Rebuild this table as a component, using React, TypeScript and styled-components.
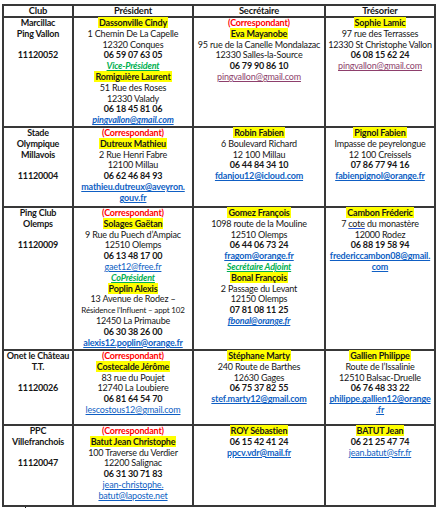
import React from 'react';
import styled, { createGlobalStyle } from 'styled-components';

const GlobalStyle = createGlobalStyle`
  body {
    margin: 0;
    background: #ffffff;
  }
`;

const Sheet = styled.div`
  padding: 4px 0 0 2px;
  font-family: Lato, "Noto Sans", sans-serif;
  font-size: 9px;
  letter-spacing: -0.18px;
  line-height: 10.8px;
  color: #161616;
`;

const Table = styled.table`
  border-collapse: collapse;
  table-layout: fixed;
  width: 432px;
`;

const Row = styled.tr<{ $h: number }>`
  height: ${p => p.$h}px;
`;

const HeadCell = styled.th`
  border: 2px solid #383838;
  padding: 0;
  font-weight: 700;
  font-size: 9.4px;
  line-height: 10px;
  text-align: center;
  vertical-align: middle;
`;

const Cell = styled.td<{ $club?: boolean }>`
  border: 2px solid #383838;
  padding: 0 1px;
  text-align: center;
  vertical-align: top;
  white-space: nowrap;
  font-weight: ${p => (p.$club ? 700 : 400)};
`;

const Line = styled.div<{ $bold?: boolean; $small?: boolean }>`
  min-height: 10.8px;
  font-weight: ${p => (p.$bold ? 700 : 'inherit')};
  font-size: ${p => (p.$small ? '8px' : 'inherit')};
`;

const Name = styled.span`
  background: #ffff00;
  font-weight: 700;
  padding: 0 1px;
`;

const Corr = styled.div`
  color: #ff0000;
  font-weight: 700;
`;

const Role = styled.div`
  color: #00b050;
  font-weight: 700;
  font-style: italic;
  text-decoration: underline;
`;

const Mail = styled.a<{ $visited?: boolean; $italic?: boolean; $light?: boolean }>`
  display: block;
  color: ${p => (p.$visited ? '#8e3f6c' : '#0f5fc4')};
  font-style: ${p => (p.$italic ? 'italic' : 'normal')};
  font-weight: ${p => (p.$light ? 400 : 700)};
  text-decoration: underline;
`;

const Squiggle = styled.span`
  text-decoration: underline;
  text-decoration-color: #2b5ad6;
`;

const Caret = styled.div`
  width: 1px;
  height: 4px;
  margin-left: 23px;
  background: #111;
`;

export default function App() {
  return (
    <Sheet>
      <GlobalStyle />
      <Table>
        <colgroup>
          <col style={{ width: 70 }} />
          <col style={{ width: 120 }} />
          <col style={{ width: 132 }} />
          <col style={{ width: 110 }} />
        </colgroup>
        <thead>
          <Row $h={12}>
            <HeadCell>Club</HeadCell>
            <HeadCell>Président</HeadCell>
            <HeadCell>Secrétaire</HeadCell>
            <HeadCell>Trésorier</HeadCell>
          </Row>
        </thead>
        <tbody>
          <Row $h={108}>
            <Cell $club>
              <Line>Marcillac</Line>
              <Line>Ping Vallon</Line>
              <Line />
              <Line>11120052</Line>
            </Cell>
            <Cell>
              <Line><Name>Dassonville Cindy</Name></Line>
              <Line>1 Chemin De La Capelle</Line>
              <Line>12320 Conques</Line>
              <Line $bold>06 59 07 63 05</Line>
              <Role>Vice-Président</Role>
              <Line><Name>Romiguière Laurent</Name></Line>
              <Line>51 Rue des Roses</Line>
              <Line>12330 Valady</Line>
              <Line $bold>06 18 45 81 06</Line>
              <Mail $italic>pingvallon@gmail.com</Mail>
            </Cell>
            <Cell>
              <Corr>(Correspondant)</Corr>
              <Line><Name>Eva Mayanobe</Name></Line>
              <Line>95 rue de la Canelle Mondalazac</Line>
              <Line>12330 Salles-la-Source</Line>
              <Line $bold>06 79 90 86 10</Line>
              <Mail $visited $light>pingvallon@gmail.com</Mail>
            </Cell>
            <Cell>
              <Line><Name>Sophie Lamic</Name></Line>
              <Line>97 rue des Terrasses</Line>
              <Line>12330 St Christophe Vallon</Line>
              <Line $bold>06 08 15 62 24</Line>
              <Mail $visited $light>pingvallon@gmail.com</Mail>
            </Cell>
          </Row>

          <Row $h={80}>
            <Cell $club>
              <Line>Stade</Line>
              <Line>Olympique</Line>
              <Line>Millavois</Line>
              <Line />
              <Line>11120004</Line>
            </Cell>
            <Cell>
              <Corr>(Correspondant)</Corr>
              <Line><Name>Dutreux Mathieu</Name></Line>
              <Line>2 Rue Henri Fabre</Line>
              <Line>12100 Millau</Line>
              <Line $bold>06 62 46 84 93</Line>
              <Mail>mathieu.dutreux@aveyron.</Mail>
              <Mail>gouv.fr</Mail>
            </Cell>
            <Cell>
              <Line><Name>Robin Fabien</Name></Line>
              <Line>6 Boulevard Richard</Line>
              <Line>12 100 Millau</Line>
              <Line $bold>06 44 84 34 10</Line>
              <Mail>fdanjou12@icloud.com</Mail>
            </Cell>
            <Cell>
              <Line><Name>Pignol Fabien</Name></Line>
              <Line>Impasse de peyrelongue</Line>
              <Line>12 100 Creissels</Line>
              <Line $bold>07 86 77 94 16</Line>
              <Mail>fabienpignol@orange.fr</Mail>
            </Cell>
          </Row>

          <Row $h={143}>
            <Cell $club>
              <Line>Ping Club</Line>
              <Line>Olemps</Line>
              <Line />
              <Line>11120009</Line>
            </Cell>
            <Cell>
              <Corr>(Correspondant)</Corr>
              <Line><Name>Solages Gaëtan</Name></Line>
              <Line>9 Rue du Puech d’Ampiac</Line>
              <Line>12510 Olemps</Line>
              <Line $bold>06 13 48 17 00</Line>
              <Mail $light>gaet12@free.fr</Mail>
              <Role>CoPrésident</Role>
              <Line><Name>Poplin Alexis</Name></Line>
              <Line>13 Avenue de Rodez –</Line>
              <Line $small>Résidence l’Influent – appt 102</Line>
              <Line>12450 La Primaube</Line>
              <Line $bold>06 30 38 26 00</Line>
              <Mail>alexis12.poplin@orange.fr</Mail>
            </Cell>
            <Cell>
              <Line><Name>Gomez François</Name></Line>
              <Line>1098 route de la Mouline</Line>
              <Line>12510 Olemps</Line>
              <Line $bold>06 44 06 73 24</Line>
              <Mail>fragom@orange.fr</Mail>
              <Role>Secrétaire Adjoint</Role>
              <Line><Name>Bonal François</Name></Line>
              <Line>2 Passage du Levant</Line>
              <Line>12150 Olemps</Line>
              <Line $bold>07 81 08 11 25</Line>
              <Mail $italic>fbonal@orange.fr</Mail>
            </Cell>
            <Cell>
              <Line><Name>Cambon Fréderic</Name></Line>
              <Line>7 <Squiggle>cote</Squiggle> du monastère</Line>
              <Line>12000 Rodez</Line>
              <Line $bold>06 88 19 58 94</Line>
              <Mail>fredericcambon08@gmail.</Mail>
              <Mail>com</Mail>
            </Cell>
          </Row>

          <Row $h={75}>
            <Cell $club>
              <Line>Onet le Château</Line>
              <Line>T.T.</Line>
              <Line />
              <Line>11120026</Line>
            </Cell>
            <Cell>
              <Corr>(Correspondant)</Corr>
              <Line><Name>Costecalde Jérôme</Name></Line>
              <Line>83 rue du Poujet</Line>
              <Line>12740 La Loubiere</Line>
              <Line $bold>06 81 64 54 70</Line>
              <Mail $light>lescostous12@gmail.com</Mail>
            </Cell>
            <Cell>
              <Line><Name>Stéphane Marty</Name></Line>
              <Line>240 Route de Barthes</Line>
              <Line>12630 Gages</Line>
              <Line $bold>06 75 37 82 55</Line>
              <Mail>stef.marty12@gmail.com</Mail>
            </Cell>
            <Cell>
              <Line><Name>Gallien Philippe</Name></Line>
              <Line>Route de l’Issalinie</Line>
              <Line>12510 Balsac-Druelle</Line>
              <Line $bold>06 76 48 33 22</Line>
              <Mail>philippe.gallien12@orange</Mail>
              <Mail>.fr</Mail>
            </Cell>
          </Row>

          <Row $h={81}>
            <Cell $club>
              <Line>PPC</Line>
              <Line>Villefranchois</Line>
              <Line />
              <Line>11120047</Line>
            </Cell>
            <Cell>
              <Corr>(Correspondant)</Corr>
              <Line><Name>Batut Jean Christophe</Name></Line>
              <Line>100 Traverse du Verdier</Line>
              <Line>12200 Salignac</Line>
              <Line $bold>06 31 30 71 83</Line>
              <Mail $light>jean-christophe.</Mail>
              <Mail $light>batut@laposte.net</Mail>
            </Cell>
            <Cell>
              <Line><Name>ROY Sébastien</Name></Line>
              <Line $bold>06 15 42 41 24</Line>
              <Mail>ppcv.vdr@mail.fr</Mail>
            </Cell>
            <Cell>
              <Line><Name>BATUT Jean</Name></Line>
              <Line $bold>06 21 25 47 74</Line>
              <Mail $light>jean.batut@sfr.fr</Mail>
            </Cell>
          </Row>
        </tbody>
      </Table>
      <Caret />
    </Sheet>
  );
}
